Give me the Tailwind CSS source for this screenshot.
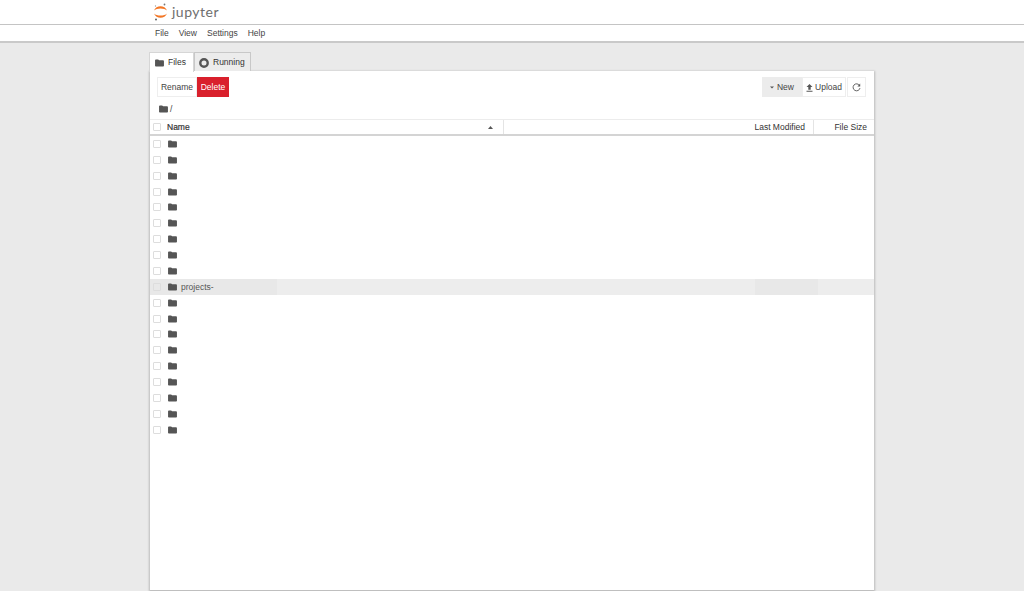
<!DOCTYPE html>
<html lang="en">
<head>
    <meta charset="UTF-8">
    <title>Jupyter Files</title>
    <script src="https://cdn.jsdelivr.net/npm/@tailwindcss/browser@4"></script>
</head>
<body class="h-[591px] overflow-hidden bg-[#eaeaea] font-['Liberation_Sans',sans-serif] text-[8.5px] text-[#333]">
    <!-- Top bar -->
    <header class="h-[25px] bg-white border-b border-[#c4c4c4] pl-[153px] flex items-center gap-[4px]">
        <svg width="15" height="19" viewBox="0 0 15 19">
            <path d="M1 7.500 C3 1.800 12 1.800 14 7.500 C11.500 4.800 3.500 4.800 1 7.500Z" fill="#f37726"/>
            <path d="M1 10.500 C3 16.200 12 16.200 14 10.500 C11.500 13.200 3.500 13.200 1 10.500Z" fill="#f37726"/>
            <circle cx="11.500" cy="1.500" r="0.900" fill="#767677"/>
            <circle cx="2.500" cy="3" r="0.700" fill="#9e9e9e"/>
            <circle cx="3" cy="16.500" r="1" fill="#616262"/>
        </svg>
        <span class="font-['Lato',sans-serif] text-[14px] leading-none tracking-[0.5px] text-[#6e6e6e] -mt-[1px]">jupyter</span>
    </header>

    <!-- Menu bar -->
    <nav class="h-[17.500px] bg-white border-b-2 border-[#c9c9c9] pl-[155px] pt-[1px] flex items-center gap-[10px] text-[#444]">
        <span>File</span><span>View</span><span>Settings</span><span>Help</span>
    </nav>

    <main class="w-[724px] ml-[150px] mt-[9.500px]">
        <!-- Tabs -->
        <div class="relative z-10 flex h-[19px] items-start -ml-[1px]">
            <div class="h-[20px] w-[45px] bg-white border border-b-0 border-[#d6d6d6] flex items-center pl-[5px] gap-[4px]">
                <svg class="w-[9px] h-[8px]" viewBox="0 0 10 9"><path d="M0 1.500 Q0 0.500 1 0.500 H3.500 L4.500 1.500 H9 Q10 1.500 10 2.500 V8 Q10 8.500 9 8.500 H1 Q0 8.500 0 8 Z" fill="#555"/></svg>
                <span>Files</span>
            </div>
            <div class="h-[19px] w-[57px] bg-[#ececec] border border-b-0 border-[#c8c8c8] flex items-center pl-[4px] pt-[1px] gap-[4px]">
                <svg width="10" height="10" viewBox="0 0 10 10"><circle cx="5" cy="5" r="3.700" fill="none" stroke="#555" stroke-width="2.400"/></svg>
                <span>Running</span>
            </div>
        </div>

        <!-- Panel -->
        <section class="h-[519px] bg-white shadow-[0_1px_2px_1px_rgba(0,0,0,0.2)]">
            <!-- Toolbar -->
            <div class="h-[30px] pt-[6px] pl-[7px] pr-[8px] flex items-start">
                <button class="h-[20px] w-[40px] pt-[1px] bg-white border border-[#eee] text-[#444]">Rename</button>
                <button class="h-[20px] w-[32px] pt-[1px] bg-[#d9202c] text-white">Delete</button>
                <div class="ml-auto flex">
                    <button class="h-[20px] w-[40px] pt-[1px] bg-[#ececec] text-[#444] flex items-center justify-center gap-[3px]">
                        <svg width="4" height="3" viewBox="0 0 4 3"><path d="M0 0.500 H4 L2 2.500Z" fill="#555"/></svg>
                        <span>New</span>
                    </button>
                    <button class="h-[20px] w-[44px] pt-[1px] bg-white border border-[#eee] text-[#444] flex items-center justify-center gap-[2px]">
                        <svg width="7" height="8" viewBox="0 0 7 8"><path d="M3.500 0 L6.500 3 H4.700 V5.800 H2.300 V3 H0.500Z M0.500 6.800 H6.500 V7.800 H0.500Z" fill="#555"/></svg>
                        <span>Upload</span>
                    </button>
                    <button class="h-[20px] w-[19px] ml-[1px] bg-white border border-[#eee] flex items-center justify-center">
                        <svg width="9" height="9" viewBox="0 0 8 8"><path d="M6.700 2.200 A3.100 3.100 0 1 0 7.100 4.500" fill="none" stroke="#555" stroke-width="0.800"/><path d="M7.300 0.500 V3 H4.800Z" fill="#555"/></svg>
                    </button>
                </div>
            </div>

            <!-- Breadcrumb -->
            <div class="h-[18px] pl-[9px] pb-[2px] flex items-center gap-[2px] text-[#444]">
                <svg class="w-[9px] h-[8px]" viewBox="0 0 10 9"><path d="M0 1.500 Q0 0.500 1 0.500 H3.500 L4.500 1.500 H9 Q10 1.500 10 2.500 V8 Q10 8.500 9 8.500 H1 Q0 8.500 0 8 Z" fill="#555"/></svg>
                <span>/</span>
            </div>

            <!-- Table header -->
            <div class="h-[17px] border-t border-[#ececec] border-b-2 border-b-[#d4d4d4] flex items-center text-[#333]">
                <div class="w-[354px] flex items-center h-full pl-[3px] border-r border-[#e4e4e4]">
                    <span class="w-[8px] h-[8px] border border-[#ddd] rounded-[1px] mr-[6px]"></span>
                    <span class="pt-[1px] [-webkit-text-stroke:0.2px_#333]">Name</span>
                    <svg class="ml-auto mr-[10px]" width="5" height="3" viewBox="0 0 5 3"><path d="M0 3 L2.500 0 L5 3Z" fill="#555"/></svg>
                </div>
                <div class="w-[310px] h-full pt-[1px] flex items-center justify-end pr-[8px] border-r border-[#e4e4e4]">Last Modified</div>
                <div class="flex-1 h-full pt-[1px] flex items-center justify-end pr-[7px]">File Size</div>
            </div>

            <!-- Rows -->
            <div id="rows"></div>
        </section>
    </main>

    <script>
        const folder = '<svg class="w-[9px] h-[8px] ml-[7px]" viewBox="0 0 10 9"><path d="M0 1.500 Q0 0.500 1 0.500 H3.500 L4.500 1.500 H9 Q10 1.500 10 2.500 V8 Q10 8.500 9 8.500 H1 Q0 8.500 0 8 Z" fill="#555"/></svg>';
        const check = '<span class="w-[8px] h-[8px] border border-[#ddd] rounded-[1px] ml-[3px]"></span>';
        const names = ['', '', '', '', '', '', '', '', '', 'projects-', '', '', '', '', '', '', '', '', ''];
        document.getElementById('rows').innerHTML = names.map(name => {
            if (!name) return `<div class="h-[15.890px] flex items-center bg-white">${check}${folder}</div>`;
            // the highlighted row is a touch darker behind the name and the date
            return `<div class="h-[15.890px] flex items-center bg-[#ededed]"><div class="w-[127px] h-full flex items-center bg-[#e8e8e8]">${check}${folder}<span class="ml-[4px] pt-[1px] text-[#555]">${name}</span></div><div class="ml-[478px] w-[63px] h-full bg-[#e8e8e8]"></div></div>`;
        }).join('');
    </script>
</body>
</html>
